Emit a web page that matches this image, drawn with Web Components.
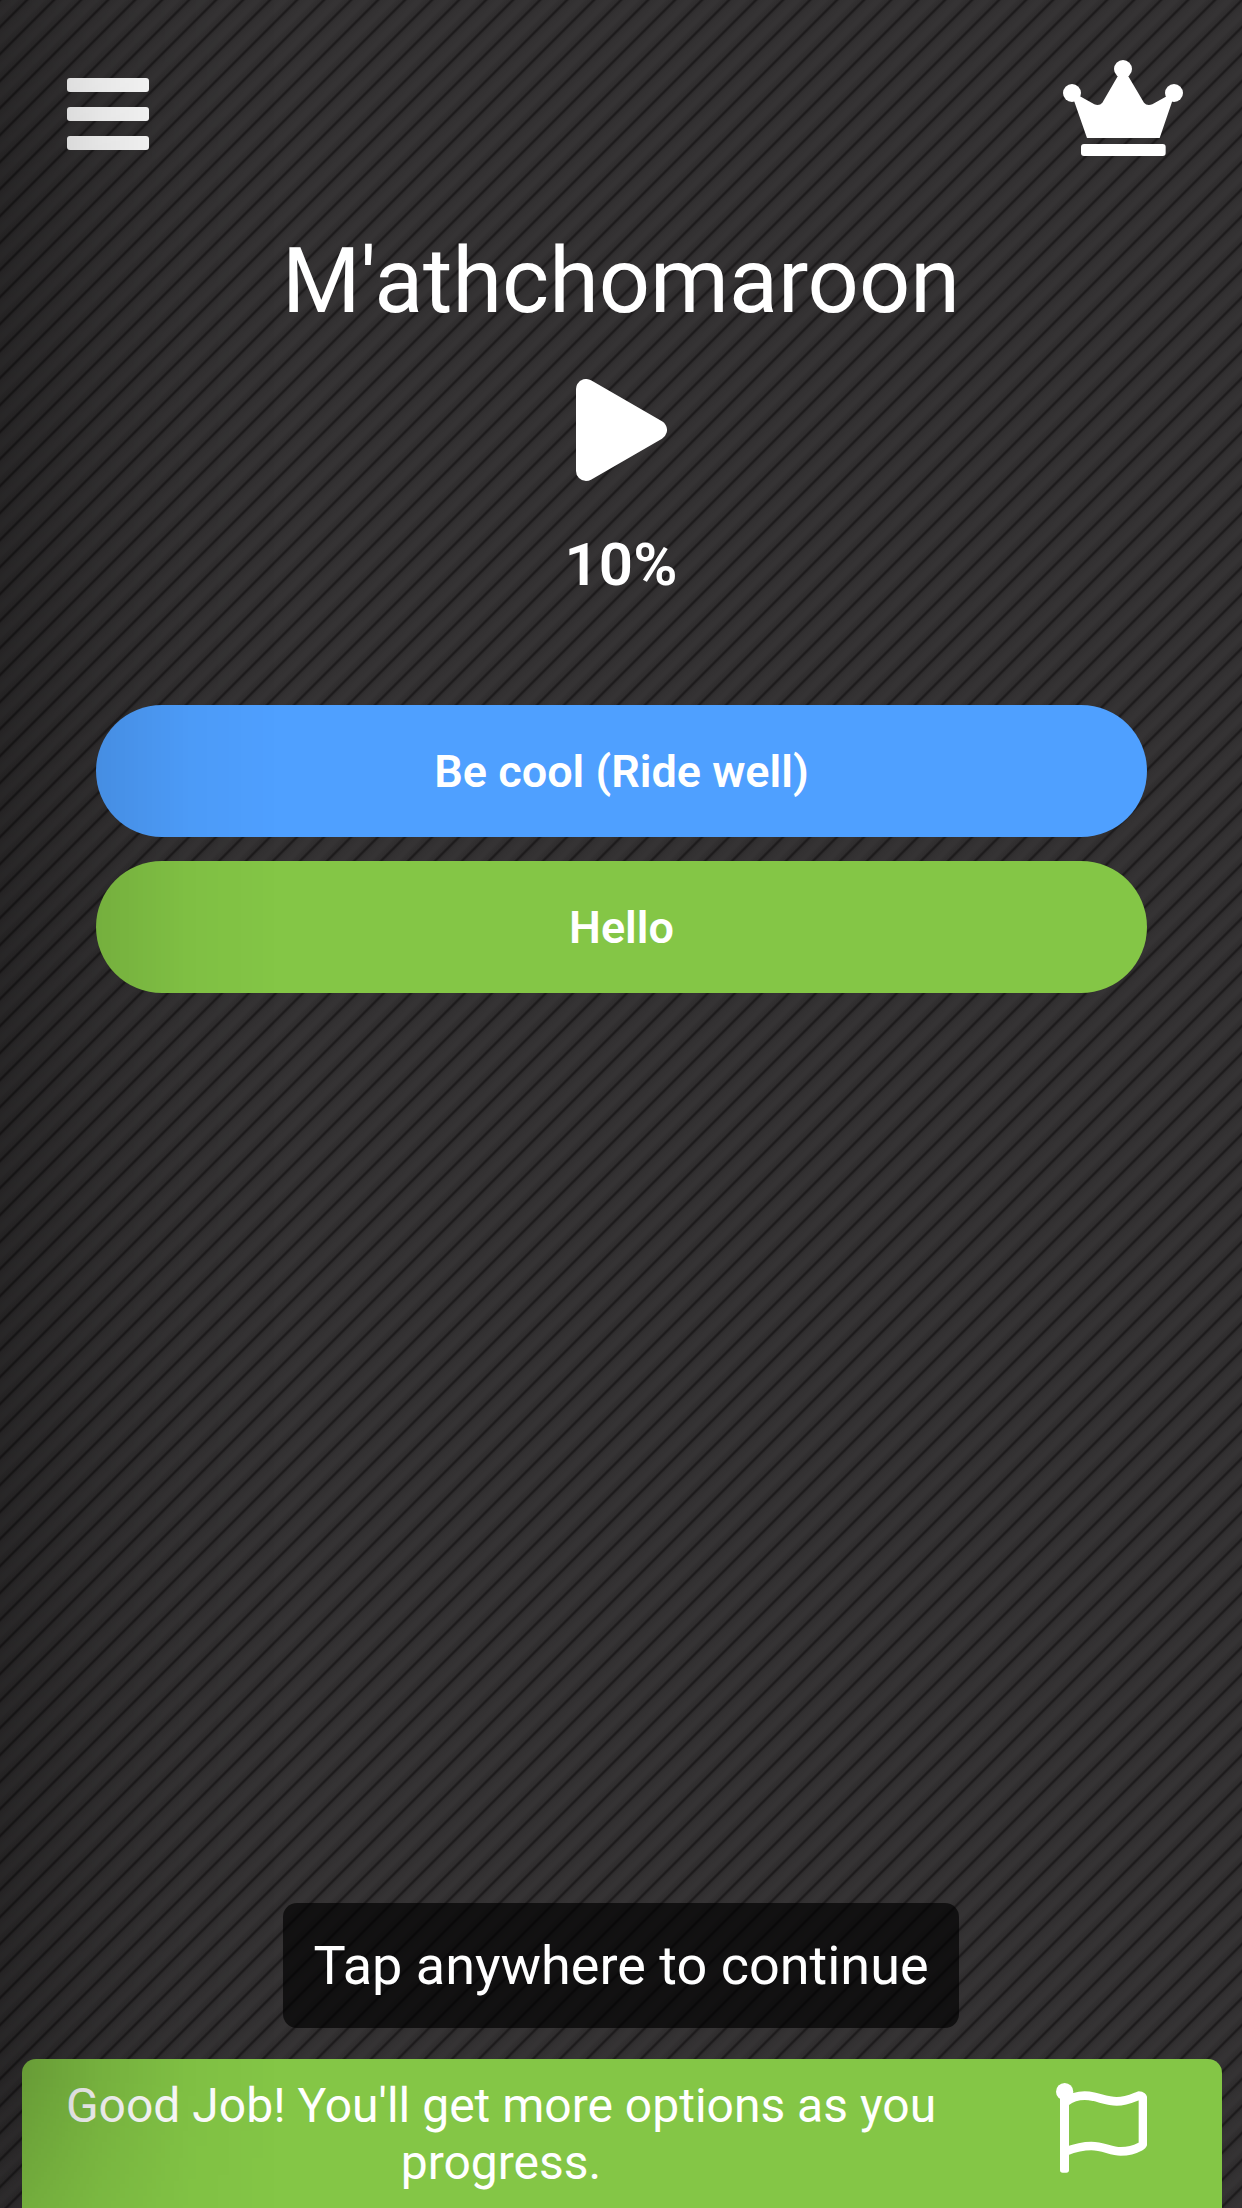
<!DOCTYPE html>
<html lang="en">
<head>
<meta charset="utf-8">
<meta name="viewport" content="width=device-width, initial-scale=1">
<title>M'athchomaroon</title>
<style>
  body {
    margin: 0;
    background: #302e2f;
    color: #fff;
    font-family: Roboto, sans-serif;
  }
</style>
</head>
<body>
<game-screen>
  <icon-button slot="header" label="Menu">
    <svg width="82" height="72" viewBox="0 0 82 72" fill="#fff">
      <rect width="82" height="14" rx="3"/>
      <rect y="29" width="82" height="14" rx="3"/>
      <rect y="58" width="82" height="14" rx="3"/>
    </svg>
  </icon-button>
  <icon-button slot="header" label="Achievements">
    <svg width="120" height="96" viewBox="69 60 360 288" fill="#fff">
      <circle cx="96" cy="159" r="27"/>
      <circle cx="249" cy="87" r="27"/>
      <circle cx="402" cy="159" r="27"/>
      <path d="M100 176L120 169L163 193Q178 199 187 188L234 107H264L312 188Q321 199 337 193L380 169L398 180L359 294H141Z"/>
      <rect x="123" y="312" width="254" height="36" rx="9"/>
    </svg>
  </icon-button>
  <life-stage slot="main" name="M'athchomaroon" progress="10%"></life-stage>
  <choice-button slot="choices" color="blue">Be cool (Ride well)</choice-button>
  <choice-button slot="choices" color="green">Hello</choice-button>
  <toast-message slot="footer">Tap anywhere to continue</toast-message>
  <hint-panel slot="footer">Good Job! You'll get more options as you progress.</hint-panel>
</game-screen>

<script>
class GameScreen extends HTMLElement {
  constructor() {
    super();
    this.attachShadow({ mode: "open" });
    this.shadowRoot.innerHTML = `
      <style>
        :host {
          display: flex;
          flex-direction: column;
          position: relative;
          min-height: 100vh;
          background:
            linear-gradient(135deg,
              #1c1a1b 0%, #211f20 2%, #2f2d2e 5%, #323031 10%, #353334 25%, #353334 31%, #312f30 38%, #2f2d2e 45%, #211f20 48%,
              #1c1a1b 50%, #211f20 52%, #2f2d2e 55%, #323031 60%, #353334 75%, #353334 81%, #312f30 88%, #2f2d2e 95%, #211f20 98%, #1c1a1b 100%)
            0 0 / 27px 27px;
        }
        /* side shadow, lies over everything on the left */
        :host::after {
          content: "";
          position: absolute;
          inset: 0;
          pointer-events: none;
          background: linear-gradient(90deg, rgba(0, 0, 0, 0.24), rgba(0, 0, 0, 0.11) 100px, rgba(0, 0, 0, 0.03) 190px, transparent 280px);
          -webkit-mask-image: linear-gradient(rgba(0, 0, 0, 0.7), #000 8%, #000 94%, rgba(0, 0, 0, 0.6));
          mask-image: linear-gradient(rgba(0, 0, 0, 0.7), #000 8%, #000 94%, rgba(0, 0, 0, 0.6));
        }
        header {
          display: flex;
          justify-content: space-between;
          align-items: flex-end;
          padding: 60px 59px 0 67px;
        }
        ::slotted(icon-button[label="Menu"]) {
          padding-bottom: 6px;
        }
        main {
          flex: 1;
          margin-top: 73px;
        }
        .choices {
          display: flex;
          flex-direction: column;
          gap: 24px;
          margin: 105px 95px 32px 96px;
        }
        footer {
          display: flex;
          flex-direction: column;
          align-items: center;
          gap: 31px;
        }
      </style>
      <header><slot name="header"></slot></header>
      <main>
        <slot name="main"></slot>
        <div class="choices"><slot name="choices"></slot></div>
      </main>
      <footer><slot name="footer"></slot></footer>
    `;
  }
}

class IconButton extends HTMLElement {
  constructor() {
    super();
    this.attachShadow({ mode: "open" });
    this.shadowRoot.innerHTML = `
      <style>
        :host { display: block; }
        button {
          display: block;
          padding: 0;
          border: none;
          background: none;
          cursor: pointer;
        }
        ::slotted(svg) { display: block; }
      </style>
      <button type="button"><slot></slot></button>
    `;
  }

  connectedCallback() {
    this.shadowRoot
      .querySelector("button")
      .setAttribute("aria-label", this.getAttribute("label"));
  }
}

class LifeStage extends HTMLElement {
  constructor() {
    super();
    this.attachShadow({ mode: "open" });
    this.shadowRoot.innerHTML = `
      <style>
        :host {
          display: flex;
          flex-direction: column;
          align-items: center;
          text-align: center;
        }
        h1 {
          margin: 0 0 44px;
          font-size: 90px;
          font-weight: 400;
          line-height: 106px;
        }
        svg { display: block; }
        p {
          margin: 49px 0 0;
          font-size: 60px;
          font-weight: 600;
          line-height: 70px;
        }
      </style>
      <h1></h1>
      <icon-button label="Play">
        <svg width="91" height="102" viewBox="0 0 91 102">
          <path d="M10 10V92L81 51Z" fill="#fff" stroke="#fff" stroke-width="20" stroke-linejoin="round"/>
        </svg>
      </icon-button>
      <p></p>
    `;
  }

  connectedCallback() {
    this.shadowRoot.querySelector("h1").textContent = this.getAttribute("name");
    this.shadowRoot.querySelector("p").textContent = this.getAttribute("progress");
  }
}

class ChoiceButton extends HTMLElement {
  constructor() {
    super();
    this.attachShadow({ mode: "open" });
    this.shadowRoot.innerHTML = `
      <style>
        :host {
          display: block;
          --fill: #4fa0ff;
        }
        :host([color="green"]) { --fill: #84c646; }
        button {
          display: block;
          width: 100%;
          padding: 40px 60px 38px;
          border: none;
          border-radius: 66px;
          background: var(--fill);
          color: #fff;
          font: 600 45px/54px Roboto, sans-serif;
          cursor: pointer;
        }
      </style>
      <button type="button"><slot></slot></button>
    `;
  }
}

class ToastMessage extends HTMLElement {
  constructor() {
    super();
    this.attachShadow({ mode: "open" });
    this.shadowRoot.innerHTML = `
      <style>
        :host {
          display: block;
          padding: 31px 30px;
          border-radius: 14px;
          background: rgba(0, 0, 0, 0.65);
          font-size: 54px;
          line-height: 63px;
        }
      </style>
      <div role="status"><slot></slot></div>
    `;
  }
}

class HintPanel extends HTMLElement {
  constructor() {
    super();
    this.attachShadow({ mode: "open" });
    this.shadowRoot.innerHTML = `
      <style>
        :host {
          display: block;
          align-self: stretch;
          margin: 0 20px 0 22px;
        }
        div {
          display: flex;
          align-items: flex-start;
          gap: 100px;
          padding: 18px 75px 17px 24px;
          border-radius: 14px 14px 0 0;
          background: #84c646;
        }
        p {
          flex: 1;
          margin: 0;
          font-size: 48px;
          line-height: 57px;
          text-align: center;
        }
        svg {
          flex: none;
          margin-top: 6px;
        }
      </style>
      <div>
        <p><slot></slot></p>
        <svg width="91" height="90" viewBox="168 158 273 270" fill="none" stroke="#fff" stroke-width="26" stroke-linejoin="round" aria-hidden="true">
          <circle cx="194" cy="184" r="26" fill="#fff" stroke="none"/>
          <rect x="180" y="184" width="27" height="243" rx="8" fill="#fff" stroke="none"/>
          <path d="M197 215C222 196 250 192 281 199C316 208 328 213 350 213C378 213 398 203 416 196Q429 196 429 207V338Q429 345 420 349C402 359 380 363 362 363C331 363 311 347 274 347C244 347 224 353 197 363"/>
        </svg>
      </div>
    `;
  }
}

customElements.define("game-screen", GameScreen);
customElements.define("icon-button", IconButton);
customElements.define("life-stage", LifeStage);
customElements.define("choice-button", ChoiceButton);
customElements.define("toast-message", ToastMessage);
customElements.define("hint-panel", HintPanel);
</script>
</body>
</html>
